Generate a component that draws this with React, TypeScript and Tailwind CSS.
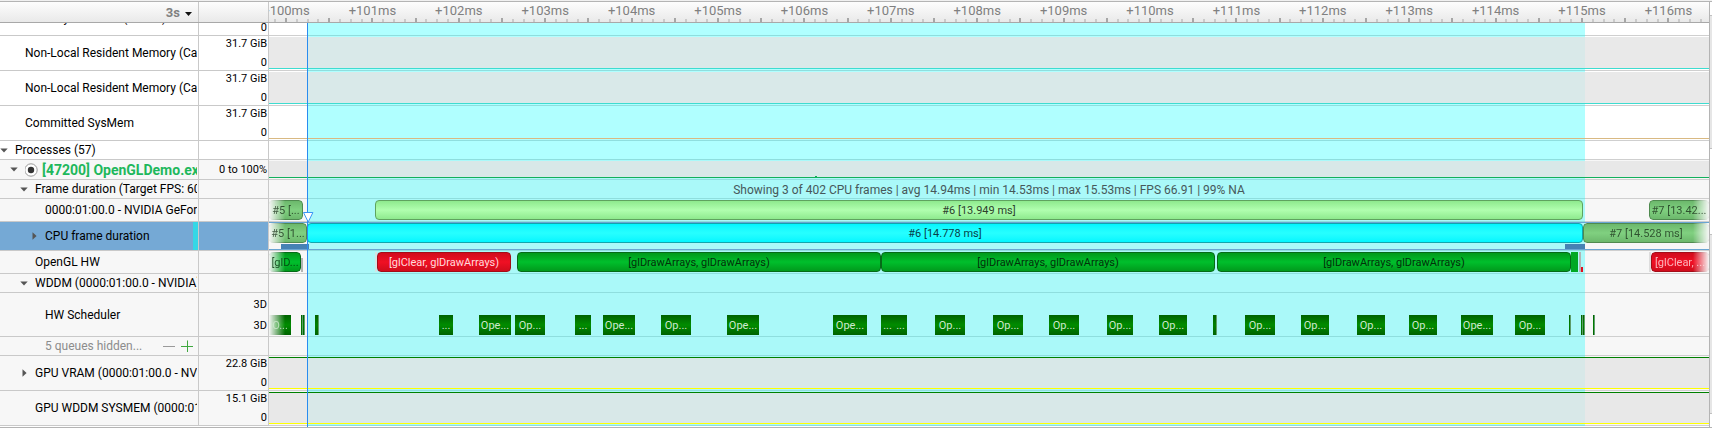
import type { CSSProperties, ReactNode } from "react";

type Kind = "idle" | "gpu" | "cpu" | "gl" | "error" | "queue" | "stub";
type Bar = { from: number; to: number; kind: Kind; text?: string; fade?: "l" | "r" };

/* The visible span of the time line, in ruler units. */
const SPAN = 1440;
const MS = 86.4;
const ORIGIN = 17;
const SEL_FROM = 39;
const SEL_TO = 1316;

const at = (from: number, to?: number): CSSProperties => ({
  left: `${(from / SPAN) * 100}%`,
  ...(to === undefined ? {} : { width: `${((to - from) / SPAN) * 100}%` }),
});

const fills: Record<Kind, string> = {
  idle: "rounded-[4px] border border-[#4f8a4f] bg-linear-to-b from-[#6cb86c] via-[#80d080] to-[#6cb86c]",
  gpu: "rounded-[4px] border border-[#5fa35f] bg-linear-to-b from-[#8eea8e] via-[#b0ffaf] to-[#8eea8e]",
  cpu: "rounded-[4px] border border-[#12a5ad] bg-linear-to-b from-[#00f6ff] via-[#26ffff] to-[#00f6ff]",
  gl: "rounded-[4px] border border-[#056b17] bg-linear-to-b from-[#009a1c] via-[#00bf2c] to-[#009a1c]",
  error: "rounded-[4px] border border-[#a30d18] bg-linear-to-b from-[#d00c1c] via-[#f01024] to-[#d00c1c]",
  queue: "bg-linear-to-b from-[#006200] via-[#008c00] to-[#006200]",
  stub: "border-r border-[#5e9c6a] bg-linear-to-b from-[#006200] via-[#008000] to-[#006200]",
};

const inks: Record<Kind, string> = {
  idle: "text-[#1c331c]",
  gpu: "text-[#2c402c]",
  cpu: "text-[#06404a]",
  gl: "text-[#03300a]",
  error: "text-[#ffdadc]",
  queue: "text-[#cfe8cf]",
  stub: "",
};

const fades = {
  l: "mask-l-from-[calc(100%-16px)] mask-l-to-100%",
  r: "mask-r-from-[calc(100%-16px)] mask-r-to-100%",
};

function Bars({ bars, top }: { bars: Bar[]; top: string }) {
  return (
    <>
      {bars.map((b) => (
        <div
          key={b.from}
          style={at(b.from, b.to)}
          className={`absolute flex h-5 items-center justify-center overflow-hidden whitespace-nowrap text-[11px] leading-none ${top} ${inks[b.kind]}`}
        >
          <span className={`absolute inset-0 ${fills[b.kind]} ${b.fade ? fades[b.fade] : ""}`} />
          <span className={`relative ${b.fade ? "opacity-80" : ""}`}>{b.text}</span>
        </div>
      ))}
    </>
  );
}

function Toggle({ open, name }: { open: boolean; name: string }) {
  return (
    <button type="button" aria-expanded={open} aria-label={name} className="flex h-3 w-2 shrink-0 items-center justify-center">
      {open ? (
        <svg width="8" height="5" viewBox="0 0 8 5" className="shrink-0">
          <path d="M0.3 0.5h7.4L4 4.6z" fill="#555" />
        </svg>
      ) : (
        <svg width="5" height="8" viewBox="0 0 5 8" className="shrink-0">
          <path d="M0.5 0.2v7.6L4.6 4z" fill="#555" />
        </svg>
      )}
    </button>
  );
}

type RowProps = {
  height: string;
  pad?: string;
  label?: ReactNode;
  open?: boolean;
  name?: string;
  shade?: boolean;
  selected?: boolean;
  range?: string[];
  spread?: string;
  children?: ReactNode;
};

function Row({ height, pad = "", label, open, name = "", shade, selected, range, spread = "justify-between", children }: RowProps) {
  const ground = selected ? "bg-[#75a9d5]" : shade ? "bg-[#f7f7f7]" : "bg-white";
  return (
    <div className={`flex shrink-0 ${height}`}>
      <div className={`relative flex w-[199px] shrink-0 items-center overflow-hidden border-r border-b border-[#c9c9c9] whitespace-nowrap ${ground} ${pad}`}>
        {open !== undefined && (
          <span className="mr-[7px] flex">
            <Toggle open={open} name={name} />
          </span>
        )}
        <div className="mr-px min-w-0 flex-1 overflow-hidden">{label}</div>
        {selected && <span className="absolute inset-y-0 right-0 w-[5px] bg-[#35d7e6]" />}
      </div>
      <div className={`flex w-[70px] shrink-0 flex-col border-r border-b border-[#c9c9c9] pr-px text-right text-[11px] leading-[15px] ${spread} ${ground}`}>
        {range?.map((r, i) => (
          <span key={i}>{r}</span>
        ))}
      </div>
      <div className={`relative min-w-0 flex-1 overflow-hidden ${shade || selected ? "bg-[#f7f7f7]" : "bg-white"}`}>
        <div className="absolute inset-x-0 bottom-0 h-px bg-[#cfcfcf]" />
        <div style={at(SEL_FROM, SEL_TO)} className="absolute inset-y-0 bg-[#00ffff]/31" />
        {children}
      </div>
    </div>
  );
}

function Usage({ line, top = "", fill = true }: { line: string; top?: string; fill?: boolean }) {
  return <div className={`absolute inset-x-0 top-px bottom-[2px] border-b ${line} ${top} ${fill ? "bg-[#e3e3e3]/80" : ""}`} />;
}

const gpuFrames: Bar[] = [
  { from: 0, to: 34, kind: "idle", text: "#5 [...", fade: "l" },
  { from: 106, to: 1314, kind: "gpu", text: "#6 [13.949 ms]" },
  { from: 1380, to: 1440, kind: "idle", text: "#7 [13.42...", fade: "r" },
];

const cpuFrames: Bar[] = [
  { from: 0, to: 38, kind: "idle", text: "#5 [1...", fade: "l" },
  { from: 38, to: 1314, kind: "cpu", text: "#6 [14.778 ms]" },
  { from: 1314, to: 1440, kind: "idle", text: "#7 [14.528 ms]", fade: "r" },
];

const glCalls: Bar[] = [
  { from: 0, to: 32, kind: "gl", text: "[glD...", fade: "l" },
  { from: 108, to: 242, kind: "error", text: "[glClear, glDrawArrays)" },
  { from: 248, to: 612, kind: "gl", text: "[glDrawArrays, glDrawArrays)" },
  { from: 612, to: 946, kind: "gl", text: "[glDrawArrays, glDrawArrays)" },
  { from: 948, to: 1302, kind: "gl", text: "[glDrawArrays, glDrawArrays)" },
  { from: 1382, to: 1440, kind: "error", text: "[glClear, ...", fade: "r" },
];

const q = (from: number, to: number, text?: string, fade?: "l"): Bar => ({ from, to, kind: text ? "queue" : "stub", text, fade });

const queue: Bar[] = [
  q(0, 22, "O...", "l"),
  q(32, 34), q(34, 36), q(46, 50),
  q(170, 184, "..."), q(210, 242, "Ope..."), q(246, 276, "Op..."), q(306, 322, "..."),
  q(334, 366, "Ope..."), q(392, 422, "Op..."), q(458, 490, "Ope..."), q(564, 598, "Ope..."),
  q(612, 625, "..."), q(625, 638, "..."), q(666, 696, "Op..."), q(724, 754, "Op..."),
  q(780, 810, "Op..."), q(838, 864, "Op..."), q(890, 918, "Op..."), q(944, 948),
  q(976, 1006, "Op..."), q(1032, 1060, "Op..."), q(1088, 1116, "Op..."), q(1140, 1168, "Op..."),
  q(1192, 1224, "Ope..."), q(1246, 1276, "Op..."),
  q(1300, 1302), q(1312, 1314), q(1314, 1316), q(1324, 1326),
];

const ticks = Array.from({ length: 134 }, (_, i) => i - 1);
const labels = Array.from({ length: 17 }, (_, i) => i);

export default function App() {
  return (
    <div className="flex h-screen flex-col overflow-hidden bg-white font-[Roboto,sans-serif] text-[12px] text-black">
      <div className="flex min-h-0 flex-1 border-t border-[#f0f0f0]">
        <main className="flex min-w-0 flex-1 flex-col border-t border-b border-[#b4b4b4]">
          <header className="flex h-[21px] shrink-0 border-b border-[#a8a8a8] bg-linear-to-b from-[#fdfdfd] to-[#e9e9e9] text-[#808080]">
            <div className="flex w-[199px] shrink-0 items-center justify-end border-r border-[#c9c9c9] pr-[6px]">
              <button type="button" className="flex items-center gap-[5px] text-[13px] leading-none font-bold">
                3s
                <svg width="7" height="4" viewBox="0 0 7 4" className="mt-[3px]">
                  <path d="M0 0h7L3.5 4z" fill="#111" />
                </svg>
              </button>
            </div>
            <div className="w-[70px] shrink-0 border-r border-[#c9c9c9]" />
            <div className="relative min-w-0 flex-1 overflow-hidden text-[13px]">
              {labels.map((n) => (
                <span key={n} style={at(ORIGIN + n * MS)} className="absolute top-px -translate-x-1/2 leading-[15px]">
                  +{100 + n}ms
                </span>
              ))}
              {ticks.map((n) => (
                <i
                  key={n}
                  style={at(ORIGIN - 1 + (n * MS) / 8)}
                  className={`absolute bottom-0 w-[2px] ${n % 4 === 0 ? "h-1 bg-[#a6a6a6]" : "h-[3px] bg-[#cacaca]"}`}
                />
              ))}
            </div>
          </header>

          <div className="relative min-h-0 flex-1 overflow-hidden">
            <div className="flex h-[13px] flex-col justify-end overflow-hidden">
              <Row height="h-[35px]" pad="pl-[25px]" label="Memory Available (Card 0)" range={["", "0"]} spread="justify-end" />
            </div>
            <Row height="h-[35px]" pad="pl-[25px]" label="Non-Local Resident Memory (Card 0)" range={["31.7 GiB", "0"]}>
              <Usage line="border-[#3edcd0]" />
            </Row>
            <Row height="h-[35px]" pad="pl-[25px]" label="Non-Local Resident Memory (Card 1)" range={["31.7 GiB", "0"]}>
              <Usage line="border-[#3edcd0]" />
            </Row>
            <Row height="h-[35px]" pad="pl-[25px]" label="Committed SysMem" range={["31.7 GiB", "0"]}>
              <Usage line="border-[#d9b982]" fill={false} />
            </Row>
            <Row height="h-[19px]" open name="Processes" label="Processes (57)" />
            <Row
              height="h-[20px]"
              pad="pl-[10px]"
              open
              name="OpenGLDemo.exe"
              shade
              range={["0 to 100%"]}
              spread="justify-center"
              label={
                <span className="flex items-center gap-1 text-[14px] leading-[18px] font-bold text-[#1eb85c]">
                  <svg width="14" height="14" viewBox="0 0 14 14" className="-ml-px shrink-0">
                    <circle cx="7" cy="7" r="6.2" fill="#fff" stroke="#999" strokeWidth="1" />
                    <circle cx="7" cy="7" r="3.2" fill="#333" />
                  </svg>
                  [47200] OpenGLDemo.exe
                </span>
              }
            >
              <Usage line="border-[#12b05c]" />
              <i style={at(546, 548)} className="absolute bottom-[3px] h-px bg-[#12b05c]" />
            </Row>
            <Row height="h-[19px]" pad="pl-5" open name="Frame duration" shade label="Frame duration (Target FPS: 60)">
              <p className="absolute inset-0 flex items-center justify-center text-[12px] leading-none text-[#46585a]">
                Showing 3 of 402 CPU frames | avg 14.94ms | min 14.53ms | max 15.53ms | FPS 66.91 | 99% NA
              </p>
            </Row>
            <Row height="h-[23px]" pad="pl-[45px]" shade label="0000:01:00.0 - NVIDIA GeForce">
              <Bars bars={gpuFrames} top="top-px" />
            </Row>
            <Row height="h-[29px]" pad="pl-[30px]" open={false} name="CPU frame duration" selected label="CPU frame duration">
              <div className="absolute inset-x-0 top-0 bottom-px border-y border-[#69a5d2]" />
              <i style={at(12, 40)} className="absolute bottom-[2px] h-[5px] bg-[#4682b4]" />
              <i style={at(1296, 1316)} className="absolute bottom-[2px] h-[5px] bg-[#4682b4]" />
              <Bars bars={cpuFrames} top="top-px" />
            </Row>
            <Row height="h-[23px]" pad="pl-[35px]" shade label="OpenGL HW">
              <i style={at(32, 34)} className="absolute bottom-[2px] h-[14px] bg-[#b4b4b4]" />
              <i style={at(106, 108)} className="absolute bottom-[2px] h-5 bg-[#d4e4e4]" />
              <i style={at(1302, 1309)} className="absolute top-px h-5 bg-[#00a824]" />
              <i style={at(1310, 1312)} className="absolute top-px h-5 bg-[#b4b4b4]" />
              <i style={at(1312, 1314)} className="absolute bottom-[2px] h-[5px] bg-[#e01020]" />
              <i style={at(1380, 1382)} className="absolute bottom-[2px] h-5 bg-[#dddddd]" />
              <Bars bars={glCalls} top="top-px" />
            </Row>
            <Row height="h-[19px]" pad="pl-5" open name="WDDM" shade label="WDDM (0000:01:00.0 - NVIDIA)" />
            <Row height="h-[44px]" pad="pl-[45px]" shade label="HW Scheduler" range={["3D", "3D"]} spread="justify-between pt-1 pb-[3px]">
              <Bars bars={queue} top="top-[22px]" />
            </Row>
            <Row
              height="h-[19px]"
              pad="pl-[45px]"
              shade
              label={
                <span className="flex items-center justify-between pr-1 text-[#8c8c8c]">
                  5 queues hidden...
                  <span className="flex gap-[6px]">
                    <button type="button" aria-label="Hide queues">
                      <svg width="12" height="12" viewBox="0 0 12 12">
                        <path d="M0 6.5h12" stroke="#9a9a9a" />
                      </svg>
                    </button>
                    <button type="button" aria-label="Show queues">
                      <svg width="12" height="12" viewBox="0 0 12 12">
                        <path d="M0 6.5h12M6.5 0.5v12" stroke="#3fa83f" />
                      </svg>
                    </button>
                  </span>
                </span>
              }
            />
            <Row height="h-[35px]" pad="pl-5" open={false} name="GPU VRAM" shade label="GPU VRAM (0000:01:00.0 - NVIDIA)" range={["22.8 GiB", "0"]}>
              <Usage line="border-b-[#ffff00]" top="border-t border-t-[#008000]" />
            </Row>
            <Row height="h-[35px]" pad="pl-[35px]" shade label="GPU WDDM SYSMEM (0000:01:00.0)" range={["15.1 GiB", "0"]}>
              <Usage line="border-b-[#ffff00]" top="border-t border-t-[#008000]" />
            </Row>

            <div className="pointer-events-none absolute inset-y-0 right-0 left-[269px]">
              <div style={at(38)} className="absolute inset-y-0 w-px bg-[#2a8cf0]" />
              <svg style={at(34)} width="11" height="11" viewBox="0 0 11 11" className="absolute top-[189px]">
                <path d="M0.5 0.5h9.4L5.2 10z" fill="#fff" stroke="#3a96f5" />
              </svg>
            </div>
          </div>
        </main>

        <aside className="flex w-[3px] shrink-0 flex-col border-t border-b border-l border-[#b4b4b4] bg-white">
          <div className="h-[13px]" />
          <div className="h-[134px] border-y border-[#c0c0c0] bg-[#e6e6e6]" />
          <div className="h-[85px]" />
          <div className="h-[180px] border-y border-[#c0c0c0] bg-[#e6e6e6]" />
        </aside>
      </div>
    </div>
  );
}
